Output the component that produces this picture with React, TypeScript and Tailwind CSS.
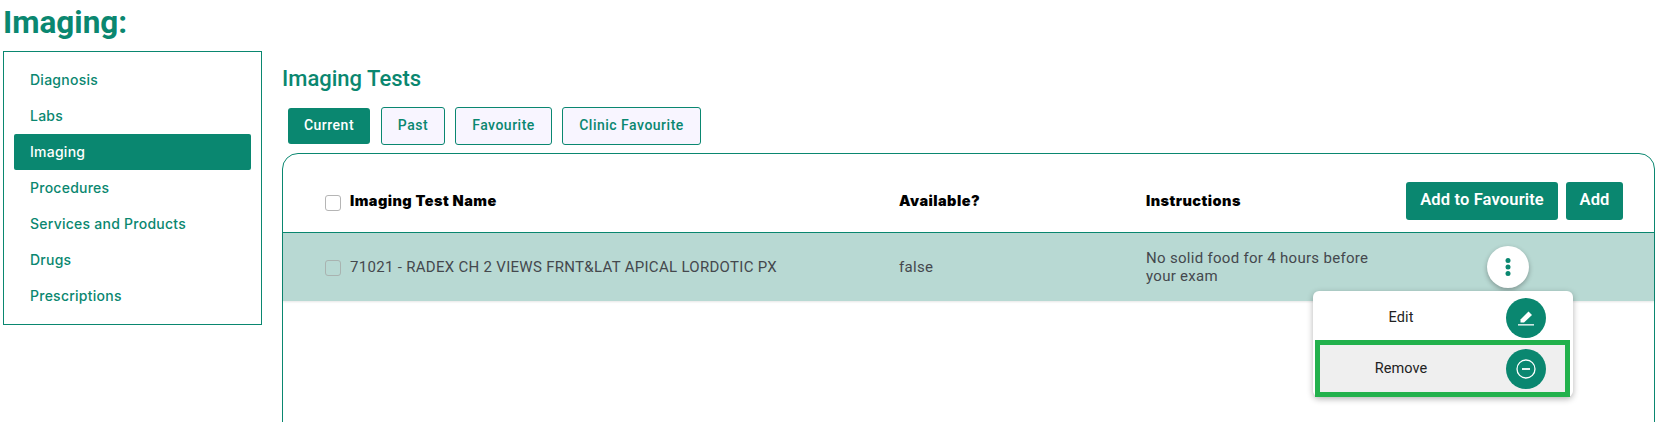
const sideItems = ["Diagnosis", "Labs", "Imaging", "Procedures", "Services and Products", "Drugs", "Prescriptions"];

function Sidebar() {
  return (
    <div className="ml-[3px] w-[259px] h-[274px] border border-[#0a8770] pt-[10px] px-[10px]">
      {sideItems.map((item) => (
        <div
          key={item}
          className={
            item === "Imaging"
              ? "h-[36px] flex items-center pl-[16px] pb-[2px] rounded-[2px] bg-[#0a8770] text-white text-[14px] tracking-[0.25px] font-medium font-['Inter',sans-serif]"
              : "h-[36px] flex items-center pl-[16px] pb-[2px] text-[#0a8770] text-[14px] tracking-[0.25px] font-medium font-['Inter',sans-serif]"
          }
        >
          {item}
        </div>
      ))}
    </div>
  );
}

function Tabs() {
  return (
    <div className="flex items-center ml-[6px] mt-[15px] font-['Roboto',sans-serif] text-[14px] font-medium tracking-[0.5px]">
      <div className="w-[82px] h-[36px] mr-[11px] pb-[1px] flex items-center justify-center rounded-[3px] bg-[#0a8770] text-white">Current</div>
      <div className="w-[64px] h-[38px] mr-[10px] pb-[1px] flex items-center justify-center rounded-[3px] border border-[#0a8770] bg-[#f8f5ff] text-[#0a8770]">Past</div>
      <div className="w-[97px] h-[38px] mr-[10px] pb-[1px] flex items-center justify-center rounded-[3px] border border-[#0a8770] bg-[#f8f5ff] text-[#0a8770]">Favourite</div>
      <div className="w-[139px] h-[38px] pb-[1px] flex items-center justify-center rounded-[3px] border border-[#0a8770] bg-[#f8f5ff] text-[#0a8770]">Clinic Favourite</div>
    </div>
  );
}

function RowMenu() {
  return (
    <>
      <div className="absolute left-[1204px] top-[92px] w-[42px] h-[42px] rounded-full bg-white flex items-center justify-center shadow-[0_2px_5px_rgba(0,0,0,0.3)]">
        <svg width="6" height="20" viewBox="0 0 6 20" fill="#0a8770">
          <circle cx="3" cy="3.5" r="2.5" />
          <circle cx="3" cy="10" r="2.5" />
          <circle cx="3" cy="16.5" r="2.5" />
        </svg>
      </div>
      <div className="absolute left-[1030px] top-[137px] w-[260px] h-[106px] rounded-[6px] bg-white shadow-[0_2px_6px_rgba(0,0,0,0.3)] font-['Roboto',sans-serif] text-[14.5px] tracking-[0.1px] text-[#222]">
        <div className="h-[49px] flex items-center justify-between pl-[58px] pr-[27px] pt-[5px]">
          <span className="w-[60px] text-center">Edit</span>
          <div className="w-[40px] h-[40px] rounded-full bg-[#0a8770] flex items-center justify-center">
            <svg width="18" height="18" viewBox="0 0 18 18" fill="none">
              <path d="M3.5 13.5V10.5L11.5 2.5l3.5 3.5-8 7.5z" fill="white" />
              <rect x="1" y="15.2" width="16" height="1.3" fill="white" />
            </svg>
          </div>
        </div>
        <div className="ml-[2px] mr-[3px] h-[57px] border-[5px] border-[#22b14c] bg-[#efefef] flex items-center justify-between pl-[51px] pr-[19px]">
          <span className="w-[60px] text-center">Remove</span>
          <div className="w-[40px] h-[40px] rounded-full bg-[#0a8770] flex items-center justify-center">
            <svg width="20" height="20" viewBox="0 0 20 20" fill="none" stroke="white">
              <circle cx="10" cy="10" r="9" strokeWidth="1.3" />
              <path d="M6 10h8" strokeWidth="1.8" />
            </svg>
          </div>
        </div>
      </div>
    </>
  );
}

function Table() {
  return (
    <div className="relative mt-[8px] w-[1373px] h-[300px] border border-[#0a8770] rounded-t-[16px] bg-white">
      <div className="flex items-center h-[79px] pt-[15px] border-b border-[#0a8770] font-['Inter',sans-serif] text-[14.5px] tracking-[0.45px] font-black text-black">
        <div className="w-[42px] shrink-0" />
        <div className="w-[16px] h-[16px] mt-[4px] rounded-[3px] border border-[#b5b5b5] shrink-0" />
        <div className="w-[549px] ml-[9px] shrink-0">Imaging Test Name</div>
        <div className="w-[247px] shrink-0">Available?</div>
        <div className="w-[260px] shrink-0">Instructions</div>
        <div className="flex gap-[8px] font-['Roboto',sans-serif] text-[16.5px] tracking-[0.15px] font-semibold text-white">
          <div className="w-[152px] h-[38px] rounded-[3px] bg-[#0a8770] flex items-center justify-center">Add to Favourite</div>
          <div className="w-[57px] h-[38px] rounded-[3px] bg-[#0a8770] flex items-center justify-center">Add</div>
        </div>
      </div>
      <div className="flex items-center h-[68px] bg-[#b8d9d3] shadow-[0_1px_2px_rgba(0,0,0,0.1)] font-['Roboto',sans-serif] text-[15px] text-[#44484d] tracking-[0.3px]">
        <div className="w-[42px] shrink-0" />
        <div className="w-[16px] h-[16px] mt-[2px] rounded-[3px] border border-[#a9b3b0] shrink-0" />
        <div className="w-[549px] ml-[9px] shrink-0">71021 - RADEX CH 2 VIEWS FRNT&amp;LAT APICAL LORDOTIC PX</div>
        <div className="w-[247px] shrink-0">false</div>
        <div className="w-[250px] shrink-0 leading-[18px]">No solid food for 4 hours before your exam</div>
      </div>
      <RowMenu />
    </div>
  );
}

export default function App() {
  return (
    <div className="w-[1664px] h-[422px] overflow-hidden bg-white">
      <h1 className="pl-[3px] h-[51px] pt-[5px] font-['Roboto',sans-serif] text-[31.5px] leading-[36px] font-bold text-[#0a8770]">Imaging:</h1>
      <div className="flex">
        <Sidebar />
        <div className="ml-[20px]">
          <h2 className="mt-[15px] font-['Roboto',sans-serif] text-[22px] leading-[26px] font-medium text-[#0a8770]">Imaging Tests</h2>
          <Tabs />
          <Table />
        </div>
      </div>
    </div>
  );
}
